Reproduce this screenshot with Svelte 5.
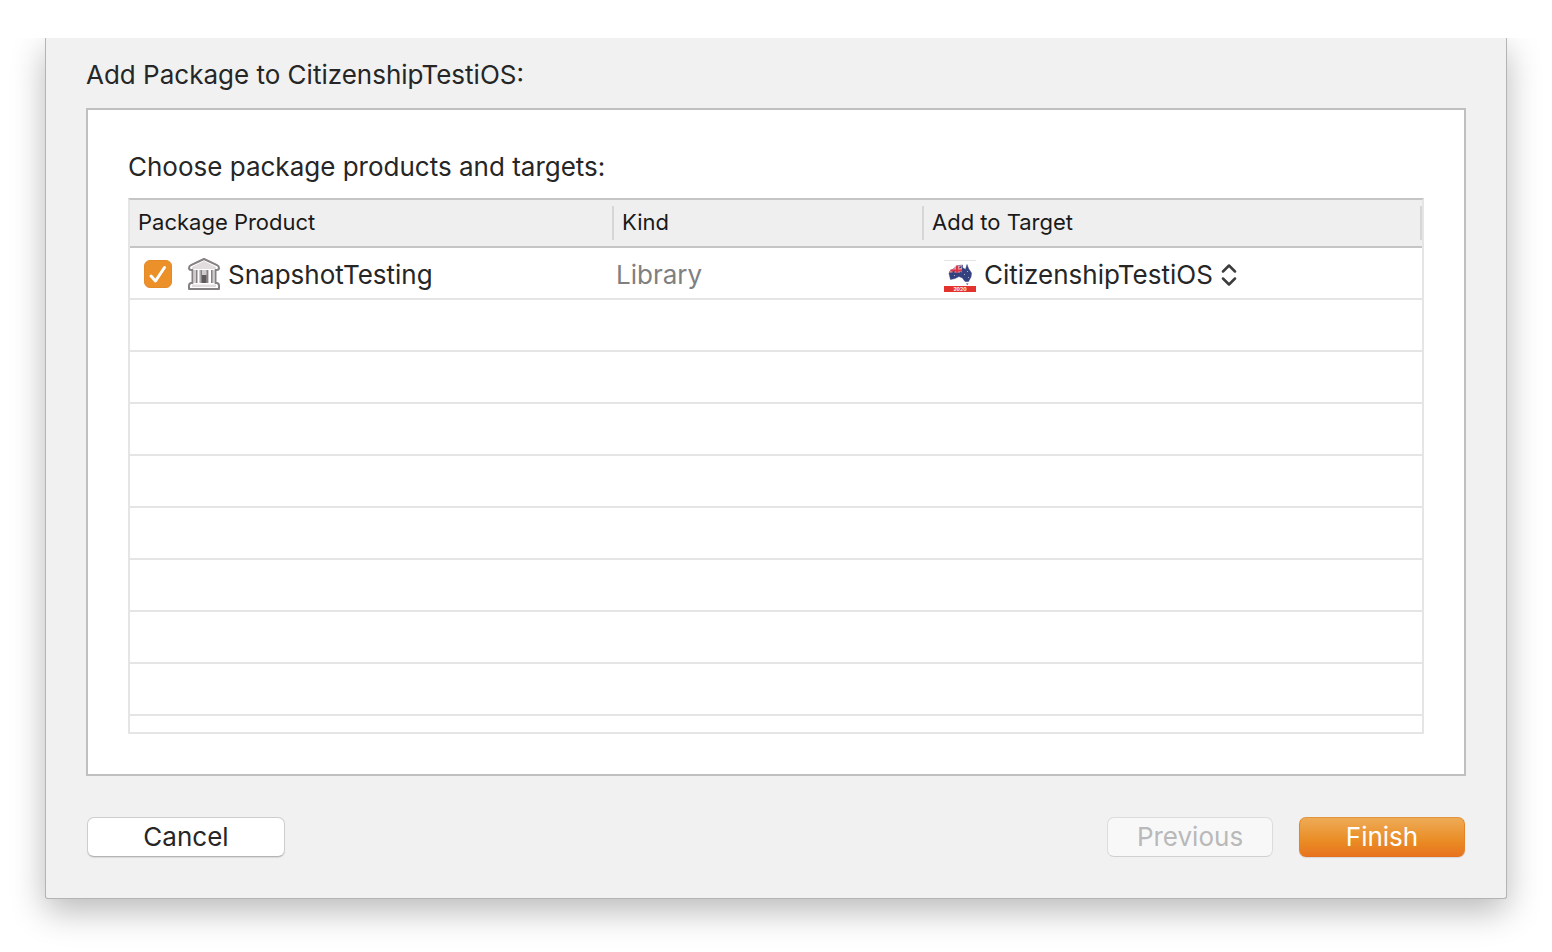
<script>
  let products = $state([
    {
      name: 'SnapshotTesting',
      kind: 'Library',
      target: 'CitizenshipTestiOS',
      checked: true,
    },
  ]);

  const targets = ['CitizenshipTestiOS'];
  const emptyRows = 8;
</script>

<main>
  <form class="sheet" onsubmit={(e) => e.preventDefault()}>
    <h1>Add Package to CitizenshipTestiOS:</h1>

    <section class="panel">
      <h2 id="products-label">Choose package products and targets:</h2>
      <table aria-labelledby="products-label">
        <colgroup>
          <col class="col-product" />
          <col class="col-kind" />
          <col />
        </colgroup>
        <thead>
          <tr>
            <th scope="col"><span>Package Product</span></th>
            <th scope="col"><span>Kind</span></th>
            <th scope="col"><span>Add to Target</span></th>
          </tr>
        </thead>
        <tbody>
          {#each products as product}
            <tr>
              <td>
                <label class="product">
                  <span class="check">
                    <input type="checkbox" bind:checked={product.checked} />
                    {#if product.checked}
                      <svg width="28" height="28" viewBox="0 0 28 28" aria-hidden="true">
                        <path d="M7 16l4.500 5L20.500 7.500" />
                      </svg>
                    {/if}
                  </span>
                  <svg class="library" width="32" height="34" viewBox="0 0 32 34" aria-hidden="true">
                    <path
                      d="M16 2L29 8.200Q31 9.200 31 11Q31 13 28.500 13H27.500V26H29Q31 26.500 31 29V32H1V29Q1 26.500 3 26H4.500V13H3.500Q1 13 1 11Q1 9.200 3 8.200Z"
                      fill="#fff"
                      stroke="#858182"
                      stroke-width="2"
                      stroke-linejoin="round"
                    />
                    <path d="M16 4L28 10V12H4V10Z" fill="#e3dcde" />
                    <path d="M6 13h3v13H6zM11 13h10v13H11zM23 13h3v13H23z" fill="#d0cbcc" />
                    <path d="M8 13h1.500v13H8zM12.500 13H14v13h-1.500zM18.500 13H20v13h-1.500zM23 13h1.500v13H23z" fill="#858182" />
                    <path d="M14 18h4.500v8H14z" fill="#5e5a5b" />
                    <path d="M4 27.500h24V30H4z" fill="#e3dcde" />
                  </svg>
                  <span class="name">{product.name}</span>
                </label>
              </td>
              <td class="kind">{product.kind}</td>
              <td>
                <label class="target">
                  <svg width="32" height="32" viewBox="0 0 32 32" aria-hidden="true">
                    <path d="M0 0h32v32H0z" fill="#fff" />
                    <path d="M0 0h32v1H0z" fill="#e4e4e4" />
                    <path
                      d="M5 13.500L6 11L10 8.500L12 6.500L15 5.500L18.500 5L18.500 7.500L21.500 9.500L23 4.500L24.500 8.500L27.500 13L27 17L24.500 21.500L21 21.500L18.500 18L15 16.500L11 18.500L6.500 19.500Z"
                      fill="#35407f"
                      stroke="#35407f"
                      stroke-width="0.500"
                      stroke-linejoin="round"
                    />
                    <path d="M6 11L10 8.500L12 6.500L18 5V12.500H5.500Z" fill="#ee9aa3" />
                    <path d="M6.500 10.500H18M13 5.500V12.500" stroke="#df3445" stroke-width="2" />
                    <path d="M8.500 12.500l2 -1M15.500 8l2 -1.500M16 12.500l1.500 0" stroke="#35407f" stroke-width="1.500" />
                    <path d="M22 23.500h2.500l-1.200 1.500z" fill="#35407f" />
                    <path d="M20 14h1v1h-1zM23 11h1v1h-1zM24 17h1v1h-1zM10 15h1v1h-1z" fill="#a9aed0" />
                    <path d="M0 26h32v6H0z" fill="#e2332f" />
                    <text x="16" y="31" text-anchor="middle">2020</text>
                  </svg>
                  <select bind:value={product.target} aria-label="Add to Target">
                    {#each targets as target}
                      <option>{target}</option>
                    {/each}
                  </select>
                  <svg class="chevrons" width="16" height="24" viewBox="0 0 16 24" aria-hidden="true">
                    <path d="M2 7.500L8 1.500L14 7.500M2 14.500L8 20.500L14 14.500" />
                  </svg>
                </label>
              </td>
            </tr>
          {/each}
          {#each Array(emptyRows) as _}
            <tr><td></td><td></td><td></td></tr>
          {/each}
          <tr class="partial"><td></td><td></td><td></td></tr>
        </tbody>
      </table>
    </section>

    <footer>
      <button type="button" class="cancel">Cancel</button>
      <button type="button" disabled>Previous</button>
      <button type="submit" class="finish">Finish</button>
    </footer>
  </form>
</main>

<style>
  :global(body) {
    margin: 0;
    background: #fff;
  }

  /* the sheet slides out from under the toolbar, so its shadow is cut off on top */
  main {
    margin-top: 38px;
    padding: 0 45px 53px;
    overflow: hidden;
    font-family: Inter, 'Liberation Sans', sans-serif;
    font-size: 26px;
    line-height: 30px;
    color: #262626;
  }

  .sheet {
    padding: 22px 40px 41px;
    border: 1px solid #b4b4b4;
    border-top: 0;
    border-radius: 0 0 3px 3px;
    background: #f1f1f1;
    box-shadow: 0 12px 34px rgba(0, 0, 0, 0.28);
  }

  h1,
  h2 {
    margin: 0;
    font-size: 26px;
    font-weight: 400;
    line-height: 30px;
  }

  h1 {
    margin-bottom: 18px;
  }

  h2 {
    margin-bottom: 16px;
  }

  .panel {
    padding: 42px 40px 40px;
    border: 2px solid #bfbfbf;
    background: #fff;
  }

  table {
    width: 100%;
    table-layout: fixed;
    border: 2px solid #e5e5e5;
    border-top-color: #c5c5c5;
    border-spacing: 0;
    box-sizing: border-box;
  }

  .col-product {
    width: 484px;
  }

  .col-kind {
    width: 310px;
  }

  th {
    height: 46px;
    padding: 0;
    border-bottom: 2px solid #c5c5c5;
    background: #efefef;
    color: #1a1a1a;
    font-size: 22px;
    font-weight: 400;
    text-align: left;
  }

  th span {
    display: block;
    padding: 0 0 2px 8px;
    border-right: 2px solid #d6d6d6;
    line-height: 32px;
  }

  td {
    height: 50px;
    padding: 0;
    border-bottom: 2px solid #e5e5e5;
  }

  .partial td {
    height: 16px;
    border-bottom: 0;
  }

  .product,
  .target {
    display: flex;
    align-items: center;
    height: 50px;
  }

  .product {
    padding: 2px 0 0 14px;
    box-sizing: border-box;
  }

  .name {
    padding-top: 2px;
  }

  .check {
    position: relative;
    width: 28px;
    height: 28px;
  }

  .check input {
    display: block;
    width: 28px;
    height: 28px;
    margin: 0;
    appearance: none;
    border: 1px solid #c4c4c4;
    border-radius: 6px;
    background: #fff;
  }

  .check input:checked {
    border-color: #e58a28;
    background: #ec9029;
  }

  .check svg {
    position: absolute;
    inset: 0;
    fill: none;
    stroke: #fff;
    stroke-width: 3;
    stroke-linecap: round;
    stroke-linejoin: round;
    pointer-events: none;
  }

  .library {
    margin: 0 8px 0 16px;
  }

  .kind {
    padding: 4px 0 0 2px;
    height: 46px;
    color: #808080;
  }

  .target {
    padding: 6px 0 0 20px;
    box-sizing: border-box;
  }

  .target text {
    fill: #fff;
    font-size: 5px;
    font-weight: 700;
  }

  select {
    margin: 0 8px;
    padding: 0 0 2px;
    appearance: none;
    border: 0;
    background: none;
    color: inherit;
    font: inherit;
  }

  .chevrons {
    fill: none;
    stroke: #3c3c3c;
    stroke-width: 2.5;
    stroke-linecap: round;
    stroke-linejoin: round;
    pointer-events: none;
  }

  footer {
    display: flex;
    gap: 26px;
    margin: 41px 1px 0;
  }

  button {
    width: 166px;
    height: 40px;
    padding: 0;
    border: 1px solid #cdcdcd;
    border-bottom-color: #b4b4b4;
    border-radius: 7px;
    background: #fff;
    box-shadow: 0 1px 1px rgba(0, 0, 0, 0.1);
    color: #262626;
    font: inherit;
  }

  button:disabled {
    border-color: #dcdcdc;
    border-bottom-color: #d0d0d0;
    background: #f8f8f8;
    box-shadow: none;
    color: #b9b9b9;
  }

  .cancel {
    width: 198px;
    margin-right: auto;
  }

  .finish {
    border-color: #e3943f #e58329 #e2701f;
    background: linear-gradient(#eeab56, #ea8c25 60%, #e8741f);
    color: #fff;
  }
</style>
